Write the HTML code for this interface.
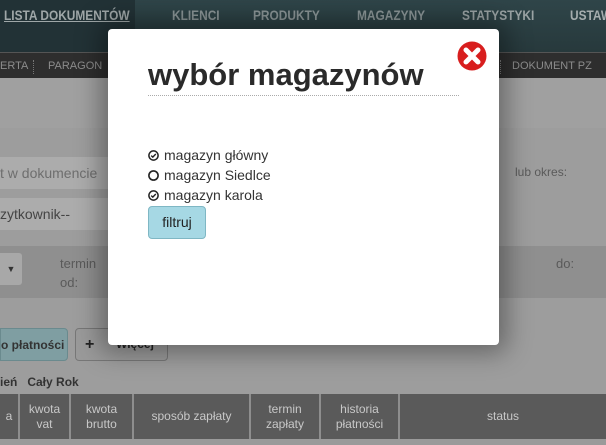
<!DOCTYPE html>
<html><head><meta charset="utf-8"><style>
body{margin:0;width:606px;height:445px;overflow:hidden;position:relative;background:#9d9d9d;font-family:"Liberation Sans",sans-serif}
.abs{position:absolute}
.nav{left:0;top:0;width:606px;height:52px;background:linear-gradient(#2f4549,#27393c)}
.nav span{position:absolute;top:7px;font-size:14px;font-weight:bold;color:#8a9596;transform:scaleX(.85);transform-origin:left}
.sub{left:0;top:52px;width:606px;height:26px;background:#2e2e2e;border-top:1px solid #555}
.sub span{position:absolute;top:7px;font-size:11px;color:#8c8c8c}
.modal{left:108px;top:29px;width:391px;height:316px;background:#fff;border-radius:4px;box-shadow:0 0 25px 8px rgba(0,0,0,.35)}
.th{top:394px;height:45px;background:#5a5a5a;color:#c8c8c8;font-size:12px;text-align:center;display:flex;align-items:center;justify-content:center;border-right:2px solid #8e8e8e;line-height:15px;box-sizing:border-box}
.g{color:#5a5a5a;font-size:13px}
.it{height:20px;display:flex;align-items:center}
.it svg{margin-right:5px}
</style></head><body>
<div class="abs nav">
<div class="abs" style="left:0;top:0;width:135px;height:52px;background:#223236"></div>
<span style="left:4px;color:#9fa7a8;text-decoration:underline">LISTA DOKUMENTÓW</span>
<span style="left:172px">KLIENCI</span><span style="left:253px">PRODUKTY</span><span style="left:357px">MAGAZYNY</span><span style="left:462px;color:#9aa3a4">STATYSTYKI</span><span style="left:570px;color:#a5adae">USTAW</span>
</div>
<div class="abs sub"><span style="left:0">ERTA</span><span style="left:33px;border-left:1px dotted #777;height:14px"></span><span style="left:48px">PARAGON</span><span style="left:500px;border-left:1px dotted #777;height:14px"></span><span style="left:512px">DOKUMENT PZ</span></div>
<div class="abs" style="left:0;top:78px;width:606px;height:50px;background:#a0a0a0"></div>
<div class="abs" style="left:0;top:157px;width:108px;height:32px;background:#acacac;color:#6e6e6e;font-size:14px;line-height:32px">t w dokumencie</div>
<div class="abs" style="left:0;top:198px;width:108px;height:32px;background:#acacac;color:#444;font-size:14px;line-height:32px">zytkownik--</div>
<div class="abs g" style="left:515px;top:165px;font-size:12px">lub okres:</div>
<div class="abs" style="left:0;top:246px;width:606px;height:52px;background:#8f8f8f"></div>
<div class="abs" style="left:0;top:253px;width:22px;height:32px;background:#a8a8a8;border-radius:0 3px 3px 0;font-size:9px;color:#333;line-height:32px;text-align:center">▼</div>
<div class="abs g" style="left:60px;top:254px;line-height:19px">termin<br>od:</div>
<div class="abs g" style="left:556px;top:256px">do:</div>
<div class="abs" style="left:0;top:328px;width:68px;height:33px;background:#7f9ea2;border:1px solid #6a8a8e;border-radius:0 4px 4px 0;color:#333;font-size:12px;font-weight:bold;line-height:33px;box-sizing:border-box">o płatności</div>
<div class="abs" style="left:75px;top:328px;width:93px;height:33px;background:#9a9a9a;border:1px solid #777;border-radius:4px;box-sizing:border-box;font-weight:bold;color:#222;font-size:12px;line-height:31px"><span style="padding-left:9px;font-size:16px">+</span><span style="position:absolute;left:40px">Więcej</span></div>
<div class="abs" style="left:0;top:375px;font-size:12px;font-weight:bold;color:#333">ień&nbsp;&nbsp;&nbsp;Cały Rok</div>
<div class="abs th" style="left:0;width:20px">a</div>
<div class="abs th" style="left:20px;width:51px">kwota<br>vat</div>
<div class="abs th" style="left:71px;width:63px">kwota<br>brutto</div>
<div class="abs th" style="left:134px;width:117px">sposób zapłaty</div>
<div class="abs th" style="left:251px;width:70px">termin<br>zapłaty</div>
<div class="abs th" style="left:321px;width:79px">historia<br>płatności</div>
<div class="abs th" style="left:400px;width:206px;border:none">status</div>
<div class="abs" style="left:0;top:439px;width:606px;height:6px;background:#9a9a9a"></div>
<div class="abs modal">
<svg class="abs" style="left:349px;top:12px" width="30" height="30" viewBox="0 0 30 30"><circle cx="15" cy="15" r="14.5" fill="#d81e1e"/><path d="M9 9L21 21M21 9L9 21" stroke="#fff" stroke-width="5" stroke-linecap="round"/></svg>
<div class="abs" style="left:40px;top:28px;font-size:31px;font-weight:bold;color:#2a2a2a">wybór magazynów</div>
<div class="abs" style="left:40px;top:66px;width:311px;border-top:1px dotted #aaa"></div>
<div class="abs" style="left:40px;top:116px;font-size:14px;color:#333">
<div class="it"><svg width="11" height="11" viewBox="0 0 11 11"><circle cx="5.5" cy="5.5" r="4.6" fill="none" stroke="#222" stroke-width="1.5"/><path d="M3.2 5.6L4.8 7.1L7.8 4" fill="none" stroke="#222" stroke-width="1.4"/></svg>magazyn główny</div>
<div class="it"><svg width="11" height="11" viewBox="0 0 11 11"><circle cx="5.5" cy="5.5" r="4.6" fill="none" stroke="#222" stroke-width="1.6"/></svg>magazyn Siedlce</div>
<div class="it"><svg width="11" height="11" viewBox="0 0 11 11"><circle cx="5.5" cy="5.5" r="4.6" fill="none" stroke="#222" stroke-width="1.5"/><path d="M3.2 5.6L4.8 7.1L7.8 4" fill="none" stroke="#222" stroke-width="1.4"/></svg>magazyn karola</div>
</div>
<div class="abs" style="left:40px;top:177px;width:58px;height:33px;background:#a6d8e4;border:1px solid #7fb7c4;border-radius:4px;box-sizing:border-box;text-align:center;line-height:31px;font-size:14px;color:#222">filtruj</div>
</div>
</body></html>
